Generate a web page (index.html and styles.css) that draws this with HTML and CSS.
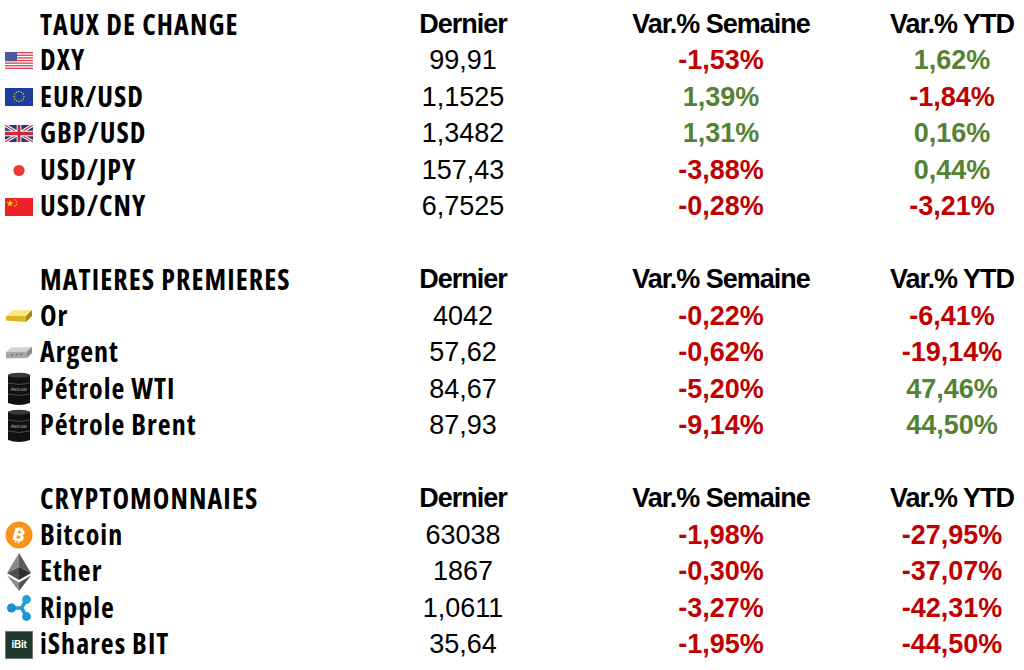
FILE: index.html
```html
<!DOCTYPE html>
<html lang="fr">
<head>
<meta charset="utf-8">
<title>Marchés</title>
<link rel="stylesheet" href="styles.css">
</head>
<body>
<main class="board">

  <section class="block">
    <div class="title">TAUX DE CHANGE</div>
    <div class="colhead">Dernier</div>
    <div class="colhead c3">Var.% Semaine</div>
    <div class="colhead">Var.% YTD</div>

    <div class="name"><span class="ico"><svg width="28" height="17" viewBox="0 0 28 17"><rect width="28" height="17" fill="#fff"/><g fill="#d8434f"><rect y="0" width="28" height="1.31"/><rect y="2.62" width="28" height="1.31"/><rect y="5.23" width="28" height="1.31"/><rect y="7.85" width="28" height="1.31"/><rect y="10.46" width="28" height="1.31"/><rect y="13.08" width="28" height="1.31"/><rect y="15.69" width="28" height="1.31"/></g><rect width="12" height="9.2" fill="#4a5a9a"/></svg></span><span class="label">DXY</span></div>
    <div class="last">99,91</div>
    <div class="pct neg c3">-1,53%</div>
    <div class="pct pos">1,62%</div>

    <div class="name"><span class="ico"><svg width="28" height="18" viewBox="0 0 28 18"><rect width="28" height="18" fill="#1d3e9c"/><g fill="#e5c531"><circle cx="14" cy="3.5" r="0.8"/><circle cx="16.5" cy="4.2" r="0.8"/><circle cx="18.3" cy="6" r="0.8"/><circle cx="19" cy="8.5" r="0.8"/><circle cx="18.3" cy="11" r="0.8"/><circle cx="16.5" cy="12.8" r="0.8"/><circle cx="14" cy="13.5" r="0.8"/><circle cx="11.5" cy="12.8" r="0.8"/><circle cx="9.7" cy="11" r="0.8"/><circle cx="9" cy="8.5" r="0.8"/><circle cx="9.7" cy="6" r="0.8"/><circle cx="11.5" cy="4.2" r="0.8"/></g></svg></span><span class="label">EUR/USD</span></div>
    <div class="last">1,1525</div>
    <div class="pct pos c3">1,39%</div>
    <div class="pct neg">-1,84%</div>

    <div class="name"><span class="ico"><svg width="28" height="17" viewBox="0 0 60 30" preserveAspectRatio="none"><rect width="60" height="30" fill="#233a7a"/><path d="M0,0 L60,30 M60,0 L0,30" stroke="#fff" stroke-width="6"/><path d="M0,0 L60,30 M60,0 L0,30" stroke="#c8283a" stroke-width="2"/><path d="M30,0 V30 M0,15 H60" stroke="#fff" stroke-width="10"/><path d="M30,0 V30 M0,15 H60" stroke="#c8283a" stroke-width="6"/></svg></span><span class="label">GBP/USD</span></div>
    <div class="last">1,3482</div>
    <div class="pct pos c3">1,31%</div>
    <div class="pct pos">0,16%</div>

    <div class="name"><span class="ico"><svg width="28" height="17" viewBox="0 0 28 17"><circle cx="14" cy="8.5" r="5.6" fill="#e83a36"/></svg></span><span class="label">USD/JPY</span></div>
    <div class="last">157,43</div>
    <div class="pct neg c3">-3,88%</div>
    <div class="pct pos">0,44%</div>

    <div class="name"><span class="ico"><svg width="28" height="18" viewBox="0 0 28 18"><rect width="28" height="18" fill="#ee2128"/><g fill="#ffde00"><polygon points="5,1.6 5.9,4.2 8.6,4.2 6.4,5.8 7.2,8.4 5,6.8 2.8,8.4 3.6,5.8 1.4,4.2 4.1,4.2"/><circle cx="10" cy="2" r="0.8"/><circle cx="11.5" cy="3.8" r="0.8"/><circle cx="11.5" cy="6.2" r="0.8"/><circle cx="10" cy="8" r="0.8"/></g></svg></span><span class="label">USD/CNY</span></div>
    <div class="last">6,7525</div>
    <div class="pct neg c3">-0,28%</div>
    <div class="pct neg">-3,21%</div>
  </section>

  <section class="block">
    <div class="title">MATIERES PREMIERES</div>
    <div class="colhead">Dernier</div>
    <div class="colhead c3">Var.% Semaine</div>
    <div class="colhead">Var.% YTD</div>

    <div class="name"><span class="ico"><svg width="28" height="16" viewBox="0 0 28 16"><polygon points="1,8 8,2 27,2 21,8" fill="#f7e889"/><polygon points="21,8 27,2 27,8 21,14" fill="#a4850f"/><polygon points="1,8 21,8 21,14 1,12.5" fill="#dcb521"/></svg></span><span class="label">Or</span></div>
    <div class="last">4042</div>
    <div class="pct neg c3">-0,22%</div>
    <div class="pct neg">-6,41%</div>

    <div class="name"><span class="ico"><svg width="28" height="14" viewBox="0 0 28 14"><polygon points="1,6 6,1.5 27,1 22,5.5" fill="#d2d2cd"/><polygon points="22,5.5 27,1 27,7 22,12" fill="#8a8a86"/><polygon points="1,6 22,5.5 22,12 1,12.5" fill="#a9a9a4"/><g fill="#6a6a67"><circle cx="7" cy="9" r="1"/><circle cx="11.5" cy="8.8" r="1"/><circle cx="16" cy="8.6" r="1"/></g></svg></span><span class="label">Argent</span></div>
    <div class="last">57,62</div>
    <div class="pct neg c3">-0,62%</div>
    <div class="pct neg">-19,14%</div>

    <div class="name"><span class="ico"><svg width="28" height="34" viewBox="0 0 28 34"><path d="M3,3 Q14,-1 25,3 V31 Q14,35 3,31 Z" fill="#111"/><ellipse cx="14" cy="3.2" rx="11" ry="2.4" fill="#3a3a3a"/><path d="M3,11 Q14,14 25,11 M3,22 Q14,25 25,22" stroke="#555" stroke-width="0.8" fill="none"/><text x="14" y="18.5" text-anchor="middle" class="tiny">Petrole</text></svg></span><span class="label">Pétrole WTI</span></div>
    <div class="last">84,67</div>
    <div class="pct neg c3">-5,20%</div>
    <div class="pct pos">47,46%</div>

    <div class="name"><span class="ico"><svg width="28" height="34" viewBox="0 0 28 34"><path d="M3,3 Q14,-1 25,3 V31 Q14,35 3,31 Z" fill="#111"/><ellipse cx="14" cy="3.2" rx="11" ry="2.4" fill="#3a3a3a"/><path d="M3,11 Q14,14 25,11 M3,22 Q14,25 25,22" stroke="#555" stroke-width="0.8" fill="none"/><text x="14" y="18.5" text-anchor="middle" class="tiny">Petrole</text></svg></span><span class="label">Pétrole Brent</span></div>
    <div class="last">87,93</div>
    <div class="pct neg c3">-9,14%</div>
    <div class="pct pos">44,50%</div>
  </section>

  <section class="block">
    <div class="title">CRYPTOMONNAIES</div>
    <div class="colhead">Dernier</div>
    <div class="colhead c3">Var.% Semaine</div>
    <div class="colhead">Var.% YTD</div>

    <div class="name"><span class="ico"><svg width="28" height="28" viewBox="0 0 28 28"><circle cx="14" cy="14" r="13.5" fill="#f7931a"/><g transform="rotate(14 14 14)"><path d="M12.3,6 V8 M15.3,6 V8 M12.3,20 V22 M15.3,20 V22" stroke="#fff" stroke-width="1.6"/><text x="14" y="20" text-anchor="middle" class="btc">B</text></g></svg></span><span class="label">Bitcoin</span></div>
    <div class="last">63038</div>
    <div class="pct neg c3">-1,98%</div>
    <div class="pct neg">-27,95%</div>

    <div class="name"><span class="ico"><svg width="28" height="38" viewBox="0 0 28 38"><polygon points="14,0 2,20 14,14" fill="#8a8a8a"/><polygon points="14,0 26,20 14,14" fill="#5a5a5a"/><polygon points="2,20 14,14 14,27" fill="#505050"/><polygon points="26,20 14,14 14,27" fill="#2e2e2e"/><polygon points="2,22.5 14,29.5 14,38" fill="#8a8a8a"/><polygon points="26,22.5 14,29.5 14,38" fill="#555"/></svg></span><span class="label">Ether</span></div>
    <div class="last">1867</div>
    <div class="pct neg c3">-0,30%</div>
    <div class="pct neg">-37,07%</div>

    <div class="name"><span class="ico"><svg width="28" height="28" viewBox="0 0 28 28"><path d="M7,14 Q14,14 16.5,14 Q19,10 21,6 M16.5,14 Q19,18 21,22" stroke="#1f9ad6" stroke-width="3.6" fill="none" stroke-linecap="round"/><circle cx="6.5" cy="14" r="4.6" fill="#1b8fd0"/><circle cx="21.5" cy="5.5" r="4.4" fill="#21a0dd"/><circle cx="21.5" cy="22.5" r="4.4" fill="#1e96d6"/></svg></span><span class="label">Ripple</span></div>
    <div class="last">1,0611</div>
    <div class="pct neg c3">-3,27%</div>
    <div class="pct neg">-42,31%</div>

    <div class="name"><span class="ico"><span class="ibit">iBit</span></span><span class="label">iShares BIT</span></div>
    <div class="last">35,64</div>
    <div class="pct neg c3">-1,95%</div>
    <div class="pct neg">-44,50%</div>
  </section>

</main>
</body>
</html>
```

FILE: styles.css
```css
html, body {
  margin: 0;
  padding: 0;
  background: #ffffff;
}

body {
  width: 1024px;
  height: 670px;
  overflow: hidden;
  font-family: "Liberation Sans", Arial, sans-serif;
  color: #000;
}

.board {
  display: flex;
  flex-direction: column;
  gap: 36.5px;
  padding-top: 6px;
}

.block {
  display: grid;
  grid-template-columns: 380px 166px 334px 144px;
  grid-auto-rows: 36.5px;
  align-items: center;
}

.title {
  font-family: "Open Sans", sans-serif;
  font-stretch: 75%;
  font-weight: 700;
  font-size: 28px;
  letter-spacing: 1.1px;
  line-height: 1;
  padding-left: 40px;
  padding-bottom: 1px;
  white-space: nowrap;
}

.colhead {
  font-weight: 700;
  font-size: 27px;
  letter-spacing: -1px;
  line-height: 1;
  text-align: center;
  white-space: nowrap;
}

.c3 {
  padding-left: 16px;
}

.name {
  display: flex;
  align-items: center;
  white-space: nowrap;
}

.label {
  font-family: "Open Sans", sans-serif;
  font-stretch: 75%;
  font-weight: 700;
  font-size: 28px;
  letter-spacing: 1px;
  line-height: 1;
  padding-bottom: 3px;
}

.ico {
  width: 40px;
  flex: 0 0 40px;
  display: flex;
  align-items: center;
  justify-content: center;
  padding-right: 2px;
  box-sizing: border-box;
}

.ico svg {
  display: block;
}

.last {
  font-size: 27px;
  line-height: 1;
  text-align: center;
}

.pct {
  font-weight: 700;
  font-size: 27px;
  line-height: 1;
  text-align: center;
}

.neg {
  color: #c00000;
}

.pos {
  color: #548235;
}

.tiny {
  font-family: "DejaVu Sans", sans-serif;
  font-size: 4.5px;
  font-style: italic;
  fill: #c8c8c8;
}

.btc {
  font-family: "DejaVu Sans", sans-serif;
  font-weight: 700;
  font-size: 17px;
  fill: #fff;
}

.ibit {
  display: flex;
  align-items: center;
  justify-content: center;
  width: 28px;
  height: 28px;
  background: #20392c;
  border: 1px solid #6b7d70;
  box-sizing: border-box;
  color: #fff;
  font-family: "Liberation Sans", sans-serif;
  font-weight: 700;
  font-size: 10px;
  letter-spacing: -0.3px;
}
```
